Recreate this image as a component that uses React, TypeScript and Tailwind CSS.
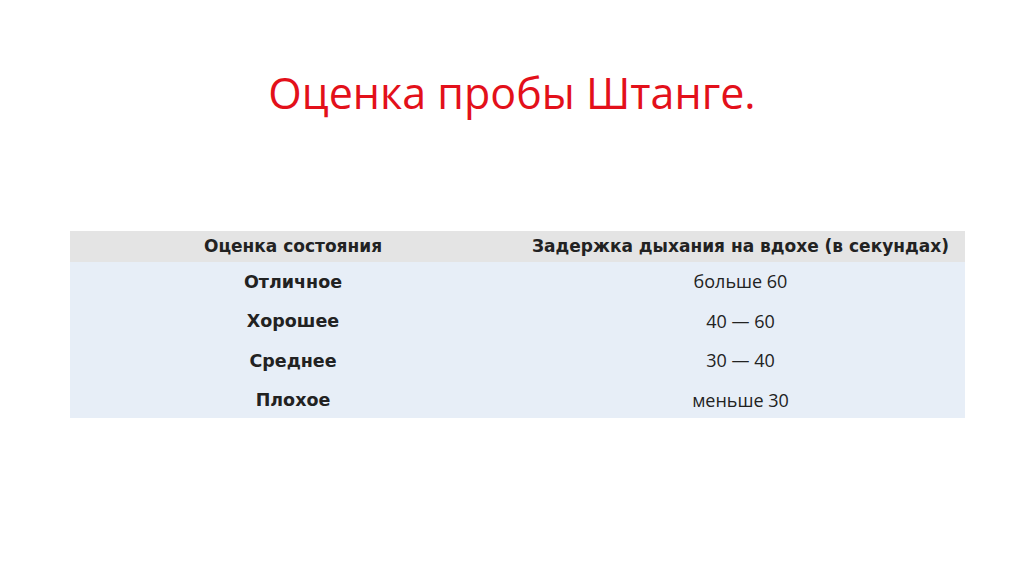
export default function App() {
  const rows = [
    ["Отличное", "больше 60"],
    ["Хорошее", "40 — 60"],
    ["Среднее", "30 — 40"],
    ["Плохое", "меньше 30"],
  ];
  return (
    <div className="w-[1024px] h-[576px] bg-white flex flex-col overflow-hidden">
      <div className="pt-[63px] h-[231px] flex justify-center">
        <h1
          className="text-[43px] leading-[60px] text-[#e3101a] font-normal"
          style={{ fontFamily: '"Open Sans", sans-serif' }}
        >
          Оценка пробы Штанге.
        </h1>
      </div>
      <div className="mx-[70px] w-[895px]">
        <div
          className="grid grid-cols-[446px_449px] h-[31px] bg-[#e4e4e4] items-center text-[#222] font-bold text-[17px]"
          style={{ fontFamily: '"DejaVu Sans", Verdana, sans-serif' }}
        >
          <div className="text-center">Оценка состояния</div>
          <div className="text-center">Задержка дыхания на вдохе (в секундах)</div>
        </div>
        <div className="bg-[#e7eef7] h-[156px]">
          {rows.map(([a, b]) => (
            <div key={a} className="grid grid-cols-[446px_449px] h-[39.5px] items-center text-[#222]">
              <div
                className="text-center font-bold text-[17.5px]"
                style={{ fontFamily: '"DejaVu Sans", Verdana, sans-serif' }}
              >
                {a}
              </div>
              <div
                className="text-center text-[18px]"
                style={{ fontFamily: '"Open Sans", sans-serif' }}
              >
                {b}
              </div>
            </div>
          ))}
        </div>
      </div>
    </div>
  );
}
